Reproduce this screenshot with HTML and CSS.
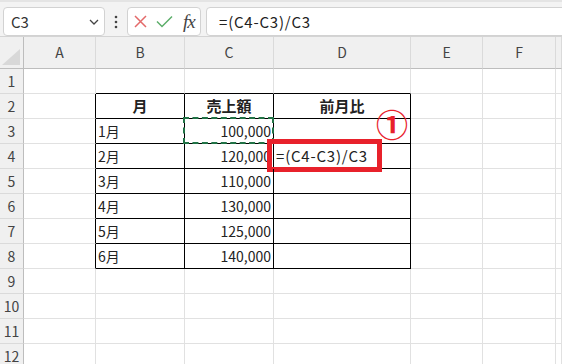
FILE: index.html
```html
<!DOCTYPE html>
<html lang="ja">
<head>
    <meta charset="UTF-8">
    <title>前月比</title>
    <link rel="stylesheet" href="styles.css">
</head>
<body>
    <div class="toolbar">
        <div class="namebox">
            <span>C3</span>
            <svg class="chevron" width="10" height="6" viewBox="0 0 10 6"><path d="M1 1 L5 5 L9 1" fill="none" stroke="#444" stroke-width="1.3"/></svg>
        </div>
        <div class="dots">
            <svg width="4" height="14" viewBox="0 0 4 14"><circle cx="2" cy="2" r="1.3" fill="#444"/><circle cx="2" cy="7" r="1.3" fill="#444"/><circle cx="2" cy="12" r="1.3" fill="#444"/></svg>
        </div>
        <div class="fxbox">
            <svg width="13" height="13" viewBox="0 0 13 13"><path d="M1 1 L12 12 M12 1 L1 12" stroke="#e36a6a" stroke-width="1.5" fill="none"/></svg>
            <svg width="17" height="13" viewBox="0 0 17 13"><path d="M1 6.5 L6 11.5 L16 1.5" stroke="#5cae6a" stroke-width="1.5" fill="none"/></svg>
            <span class="fx">fx</span>
        </div>
        <div class="formula">=(C4-C3)/C3</div>
    </div>

    <div class="sheet">
        <div class="row head">
            <div class="corner"><svg width="18" height="16" viewBox="0 0 18 16"><path d="M18 0 L18 16 L0 16 Z" fill="#d8d8d8"/></svg></div>
            <div class="hd">A</div><div class="hd">B</div><div class="hd">C</div><div class="hd">D</div><div class="hd">E</div><div class="hd">F</div><div class="hd"></div>
        </div>
        <div class="row">
            <div class="rh">1</div><div class="c"></div><div class="c tt"></div><div class="c tt"></div><div class="c tt"></div><div class="c"></div><div class="c"></div><div class="c"></div>
        </div>
        <div class="row">
            <div class="rh">2</div><div class="c tl"></div><div class="c tb th">月</div><div class="c tb th">売上額</div><div class="c tb th">前月比</div><div class="c"></div><div class="c"></div><div class="c"></div>
        </div>
        <div class="row">
            <div class="rh">3</div><div class="c tl"></div><div class="c tb">1月</div><div class="c tb num copied">100,000</div><div class="c tb marked"><span class="badge">①</span></div><div class="c"></div><div class="c"></div><div class="c"></div>
        </div>
        <div class="row">
            <div class="rh">4</div><div class="c tl"></div><div class="c tb">2月</div><div class="c tb num">120,000</div><div class="c tb editing"><span class="redbox"></span>=(C4-C3)/C3</div><div class="c"></div><div class="c"></div><div class="c"></div>
        </div>
        <div class="row">
            <div class="rh">5</div><div class="c tl"></div><div class="c tb">3月</div><div class="c tb num">110,000</div><div class="c tb"></div><div class="c"></div><div class="c"></div><div class="c"></div>
        </div>
        <div class="row">
            <div class="rh">6</div><div class="c tl"></div><div class="c tb">4月</div><div class="c tb num">130,000</div><div class="c tb"></div><div class="c"></div><div class="c"></div><div class="c"></div>
        </div>
        <div class="row">
            <div class="rh">7</div><div class="c tl"></div><div class="c tb">5月</div><div class="c tb num">125,000</div><div class="c tb"></div><div class="c"></div><div class="c"></div><div class="c"></div>
        </div>
        <div class="row">
            <div class="rh">8</div><div class="c tl"></div><div class="c tb">6月</div><div class="c tb num">140,000</div><div class="c tb"></div><div class="c"></div><div class="c"></div><div class="c"></div>
        </div>
        <div class="row">
            <div class="rh">9</div><div class="c"></div><div class="c"></div><div class="c"></div><div class="c"></div><div class="c"></div><div class="c"></div><div class="c"></div>
        </div>
        <div class="row">
            <div class="rh">10</div><div class="c"></div><div class="c"></div><div class="c"></div><div class="c"></div><div class="c"></div><div class="c"></div><div class="c"></div>
        </div>
        <div class="row">
            <div class="rh">11</div><div class="c"></div><div class="c"></div><div class="c"></div><div class="c"></div><div class="c"></div><div class="c"></div><div class="c"></div>
        </div>
        <div class="row">
            <div class="rh">12</div><div class="c"></div><div class="c"></div><div class="c"></div><div class="c"></div><div class="c"></div><div class="c"></div><div class="c"></div>
        </div>
    </div>
</body>
</html>
```

FILE: styles.css
```css
body, html {
    margin: 0;
    padding: 0;
    height: 364px;
    overflow: hidden;
    font-family: "Noto Sans CJK JP", "Noto Sans", sans-serif;
    color: #222;
    background-color: #fff;
}

* {
    box-sizing: border-box;
}

/* formula bar */
.toolbar {
    height: 37px;
    display: flex;
    align-items: flex-start;
    padding: 7px 0 0 3px;
    background-color: #f3f3f3;
    border-top: 2px solid #e4e4e4;
    border-bottom: 1px solid #d4d4d4;
    overflow: hidden;
}

.toolbar > div {
    margin-top: -2px;
}

.namebox {
    width: 102px;
    height: 29px;
    background-color: #fff;
    border: 1px solid #d2d2d2;
    border-radius: 4px;
    display: flex;
    align-items: center;
    justify-content: space-between;
    padding: 0 5px 0 7px;
    font-size: 15px;
    color: #333;
}

.dots {
    width: 22px;
    height: 29px;
    display: flex;
    align-items: center;
    justify-content: center;
}

.fxbox {
    width: 74px;
    height: 29px;
    background-color: #fff;
    border: 1px solid #d2d2d2;
    border-radius: 4px;
    display: flex;
    align-items: center;
    gap: 9px;
    padding-left: 6px;
}

.fx {
    font-family: "Liberation Serif", serif;
    font-style: italic;
    font-size: 19px;
    color: #444;
    margin-left: 1px;
    letter-spacing: -1px;
}

.formula {
    flex: 1;
    height: 29px;
    margin-left: 5px;
    margin-right: -10px;
    background-color: #fff;
    border: 1px solid #d2d2d2;
    border-radius: 4px;
    padding-left: 12px;
    font-size: 15px;
    line-height: 27px;
    letter-spacing: 0.8px;
    color: #222;
}

/* sheet grid */
.row {
    display: grid;
    grid-template-columns: 24px 72px 89px 89px 137px 72px 73px 1fr;
    height: 25px;
}

.row.head {
    height: 32px;
}

.corner {
    background-color: #f0f0f0;
    border-right: 1px solid #bdbdbd;
    border-bottom: 1px solid #bdbdbd;
    display: flex;
    align-items: flex-end;
    justify-content: flex-end;
    padding: 0 3px 3px 0;
}

.hd {
    background-color: #f0f0f0;
    border-right: 1px solid #dadada;
    border-bottom: 1px solid #bdbdbd;
    text-align: center;
    font-size: 14px;
    line-height: 30px;
    color: #444;
}

.rh {
    background-color: #f0f0f0;
    border-right: 1px solid #bdbdbd;
    border-bottom: 1px solid #dadada;
    text-align: center;
    font-size: 14px;
    line-height: 24px;
    color: #444;
}

.c {
    border-right: 1px solid #e1e1e1;
    border-bottom: 1px solid #e1e1e1;
    font-size: 14px;
    line-height: 24px;
    padding: 0 2px;
    white-space: nowrap;
    position: relative;
}

.c.tt {
    border-bottom-color: #000;
}

.c.tl {
    border-right-color: #000;
}

.c.tb {
    border-right-color: #000;
    border-bottom-color: #000;
}

.th {
    font-weight: bold;
    text-align: center;
    font-size: 15px;
}

.num {
    text-align: right;
}

/* copy marquee around C3 */
.copied::after {
    content: "";
    position: absolute;
    top: -2px;
    left: -2px;
    right: -1px;
    bottom: -1px;
    border: 2px dashed #217346;
}

.badge {
    position: absolute;
    left: 102px;
    top: -12px;
    font-size: 32px;
    line-height: 32px;
    font-weight: bold;
    color: #e8212b;
}

.editing {
    font-size: 15px;
    letter-spacing: 0.8px;
}

.redbox {
    position: absolute;
    left: -7px;
    top: -5px;
    width: 115px;
    height: 33px;
    border: 5px solid #e8212b;
}
```
